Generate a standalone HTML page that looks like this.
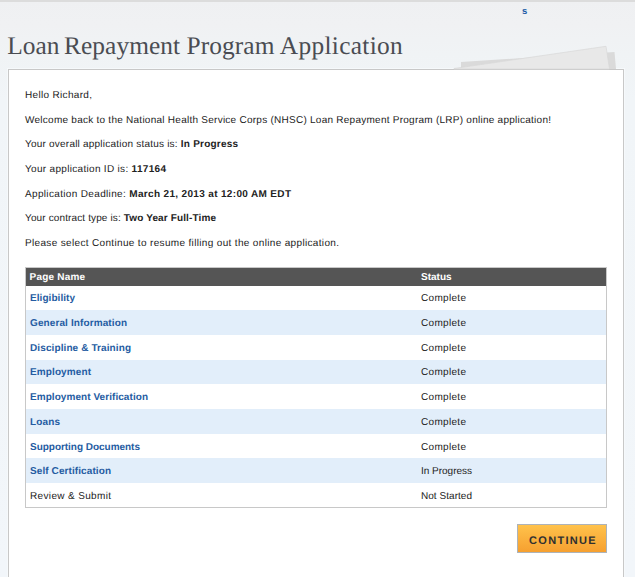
<!DOCTYPE html>
<html><head><meta charset="utf-8">
<style>
html,body{margin:0;padding:0;}
body *{text-rendering:geometricPrecision;}
body{width:635px;height:577px;overflow:hidden;position:relative;background:linear-gradient(#eff0f2 0px,#f0f1f3 25px,#f0f3f5 55px,#f1f5f8 100px,#f2f6fa 577px);font-family:"Liberation Sans",sans-serif;}
.topbar{position:absolute;left:0;top:0;width:635px;height:2px;background:#dcdcdc;}
.slink{position:absolute;left:522px;top:6px;font-size:9.5px;line-height:12px;font-weight:bold;color:#1f5ea8;}
h1{position:absolute;left:0;top:31px;margin:0;font-family:"Liberation Serif",serif;font-weight:normal;font-size:25.4px;line-height:30px;color:#4a4c52;white-space:nowrap;}
h1 span{position:absolute;top:0;}
svg.paper{position:absolute;left:0;top:0;}
.box{position:absolute;left:8px;top:69px;width:614px;height:600px;border:1px solid #c8c8c8;background:#fff;box-shadow:0 0 0 1px #f6f9fb;}
.t{position:absolute;font-size:10px;line-height:12px;color:#222;white-space:nowrap;}
.lk{color:#255ca2;font-weight:bold;}
.thead{position:absolute;left:25px;top:267px;width:580px;height:18px;border:1px solid #c8c8c8;border-bottom:0;background:#555;}
.tbody{position:absolute;left:25px;top:286px;width:580px;height:221px;border:1px solid #c8c8c8;border-top:0;background:#fff;}
.row{position:absolute;left:26px;width:580px;background:#e2eefa;}
.th{position:absolute;font-size:10px;line-height:12px;color:#fff;font-weight:bold;white-space:nowrap;}
.btn{position:absolute;left:517px;top:524px;width:88px;height:27px;border:1px solid #adb3b9;background:linear-gradient(#ffc24b,#f6a030);}
.btxt{position:absolute;left:529px;top:535px;font-size:11px;line-height:12px;font-weight:bold;color:#303030;letter-spacing:1.32px;white-space:nowrap;}
</style></head><body>
<div class="topbar"></div>
<div class="slink">s</div>
<h1><span style="left:7.3px;letter-spacing:0px">Loan</span><span style="left:64px;letter-spacing:0.06px">Repayment</span><span style="left:186.6px;letter-spacing:0.07px">Program</span><span style="left:279.8px;letter-spacing:0.3px">Application</span></h1>

<div class="box"></div>
<svg class="paper" width="635" height="80">
  <polygon points="461,62 614.5,52 616,69 461,69" fill="#dadada"/>
  <polygon points="454,68.5 606,46.3 609.5,69 454,69" fill="#e8e8e8" stroke="#d8d8d8" stroke-width="0.7"/>
</svg>
<div class="thead"></div>
<div class="tbody"></div>
<div class="row" style="top:310px;height:25px"></div>
<div class="row" style="top:360px;height:24px"></div>
<div class="row" style="top:409px;height:25px"></div>
<div class="row" style="top:458px;height:25px"></div>

<div class="th" style="left:29.6px;top:272px;letter-spacing:0.2px">Page Name</div>
<div class="th" style="left:421px;top:272px">Status</div>
<div class="t" style="left:25px;top:90px;letter-spacing:0.322px">Hello Richard,</div>
<div class="t" style="left:25px;top:115px;letter-spacing:0.255px">Welcome back to the National Health Service Corps (NHSC) Loan Repayment Program (LRP) online application!</div>
<div class="t" style="left:25px;top:139px;letter-spacing:0.216px">Your overall application status is: <b>In Progress</b></div>
<div class="t" style="left:25px;top:164px;letter-spacing:0.311px">Your application ID is: <b>117164</b></div>
<div class="t" style="left:25px;top:189px;letter-spacing:0.340px">Application Deadline: <b>March 21, 2013 at 12:00 AM EDT</b></div>
<div class="t" style="left:25px;top:213px;letter-spacing:0.129px">Your contract type is: <b>Two Year Full-Time</b></div>
<div class="t" style="left:25px;top:238px;letter-spacing:0.339px">Please select Continue to resume filling out the online application.</div>
<div class="t lk" style="left:30px;top:293px;letter-spacing:0.055px">Eligibility</div>
<div class="t lk" style="left:30px;top:318px;letter-spacing:0.110px">General Information</div>
<div class="t lk" style="left:30px;top:343px;letter-spacing:0.105px">Discipline &amp; Training</div>
<div class="t lk" style="left:30px;top:367px;letter-spacing:0.109px">Employment</div>
<div class="t lk" style="left:30px;top:392px;letter-spacing:0.059px">Employment Verification</div>
<div class="t lk" style="left:30px;top:417px;letter-spacing:0.137px">Loans</div>
<div class="t lk" style="left:30px;top:442px;letter-spacing:-0.030px">Supporting Documents</div>
<div class="t lk" style="left:30px;top:466px;letter-spacing:0.090px">Self Certification</div>
<div class="t" style="left:30px;top:491px;letter-spacing:0.347px">Review &amp; Submit</div>
<div class="t" style="left:421px;top:293px;letter-spacing:0.312px">Complete</div>
<div class="t" style="left:421px;top:318px;letter-spacing:0.312px">Complete</div>
<div class="t" style="left:421px;top:343px;letter-spacing:0.312px">Complete</div>
<div class="t" style="left:421px;top:367px;letter-spacing:0.312px">Complete</div>
<div class="t" style="left:421px;top:392px;letter-spacing:0.312px">Complete</div>
<div class="t" style="left:421px;top:417px;letter-spacing:0.312px">Complete</div>
<div class="t" style="left:421px;top:442px;letter-spacing:0.312px">Complete</div>
<div class="t" style="left:421px;top:466px;letter-spacing:-0.014px">In Progress</div>
<div class="t" style="left:421px;top:491px;letter-spacing:0.041px">Not Started</div>
<div class="btn"></div><div class="btxt">CONTINUE</div>
</body></html>
